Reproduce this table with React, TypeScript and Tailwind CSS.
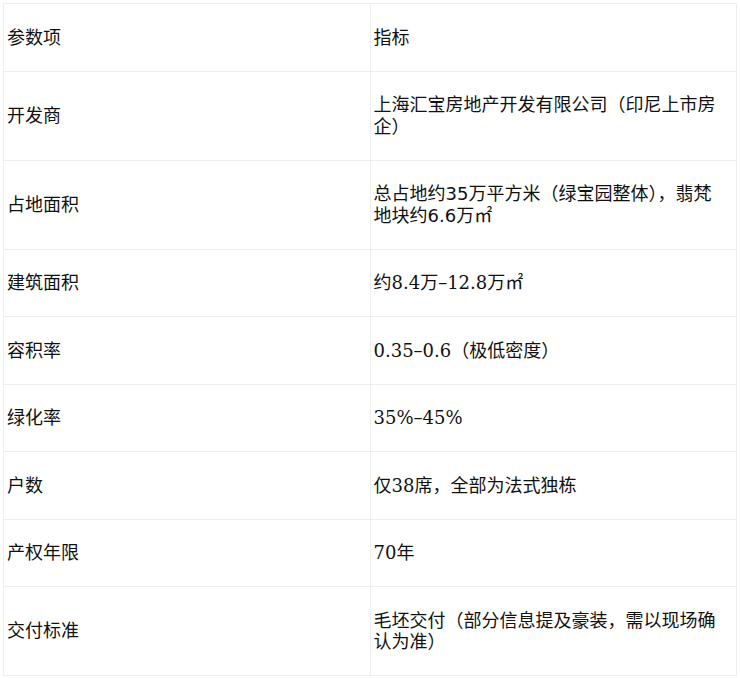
const ROWS: { label: string; value: React.ReactNode }[] = [
  { label: '参数项', value: '指标' },
  { label: '开发商', value: '上海汇宝房地产开发有限公司（印尼上市房企）' },
  {
    label: '占地面积',
    value: (
      <>
        总占地约<span className="font-['DejaVu_Sans']">35</span>万平方米（绿宝园整体），翡梵地块约
        <span className="font-['DejaVu_Sans']">6.6</span>万㎡
      </>
    ),
  },
  { label: '建筑面积', value: '约8.4万–12.8万㎡' },
  { label: '容积率', value: '0.35–0.6（极低密度）' },
  { label: '绿化率', value: '35%–45%' },
  { label: '户数', value: '仅38席，全部为法式独栋' },
  { label: '产权年限', value: '70年' },
  { label: '交付标准', value: '毛坯交付（部分信息提及豪装，需以现场确认为准）' },
]

export default function App() {
  return (
    <div className="min-h-screen bg-white px-[3px] pt-[3px] font-['DejaVu_Serif','Noto_Sans_CJK_SC',serif] text-[18px] text-[#111]">
      <table className="w-full table-fixed border-collapse">
        <tbody>
          {ROWS.map((r) => (
            <tr key={r.label}>
              <td className="w-1/2 border border-[#eeeeee] py-[22.5px] pl-[3px] pr-[8px] align-middle leading-[21.5px]">
                {r.label}
              </td>
              <td className="border border-[#eeeeee] py-[22.5px] pl-[3px] pr-[8px] align-middle leading-[21.5px]">
                {r.value}
              </td>
            </tr>
          ))}
        </tbody>
      </table>
    </div>
  )
}
